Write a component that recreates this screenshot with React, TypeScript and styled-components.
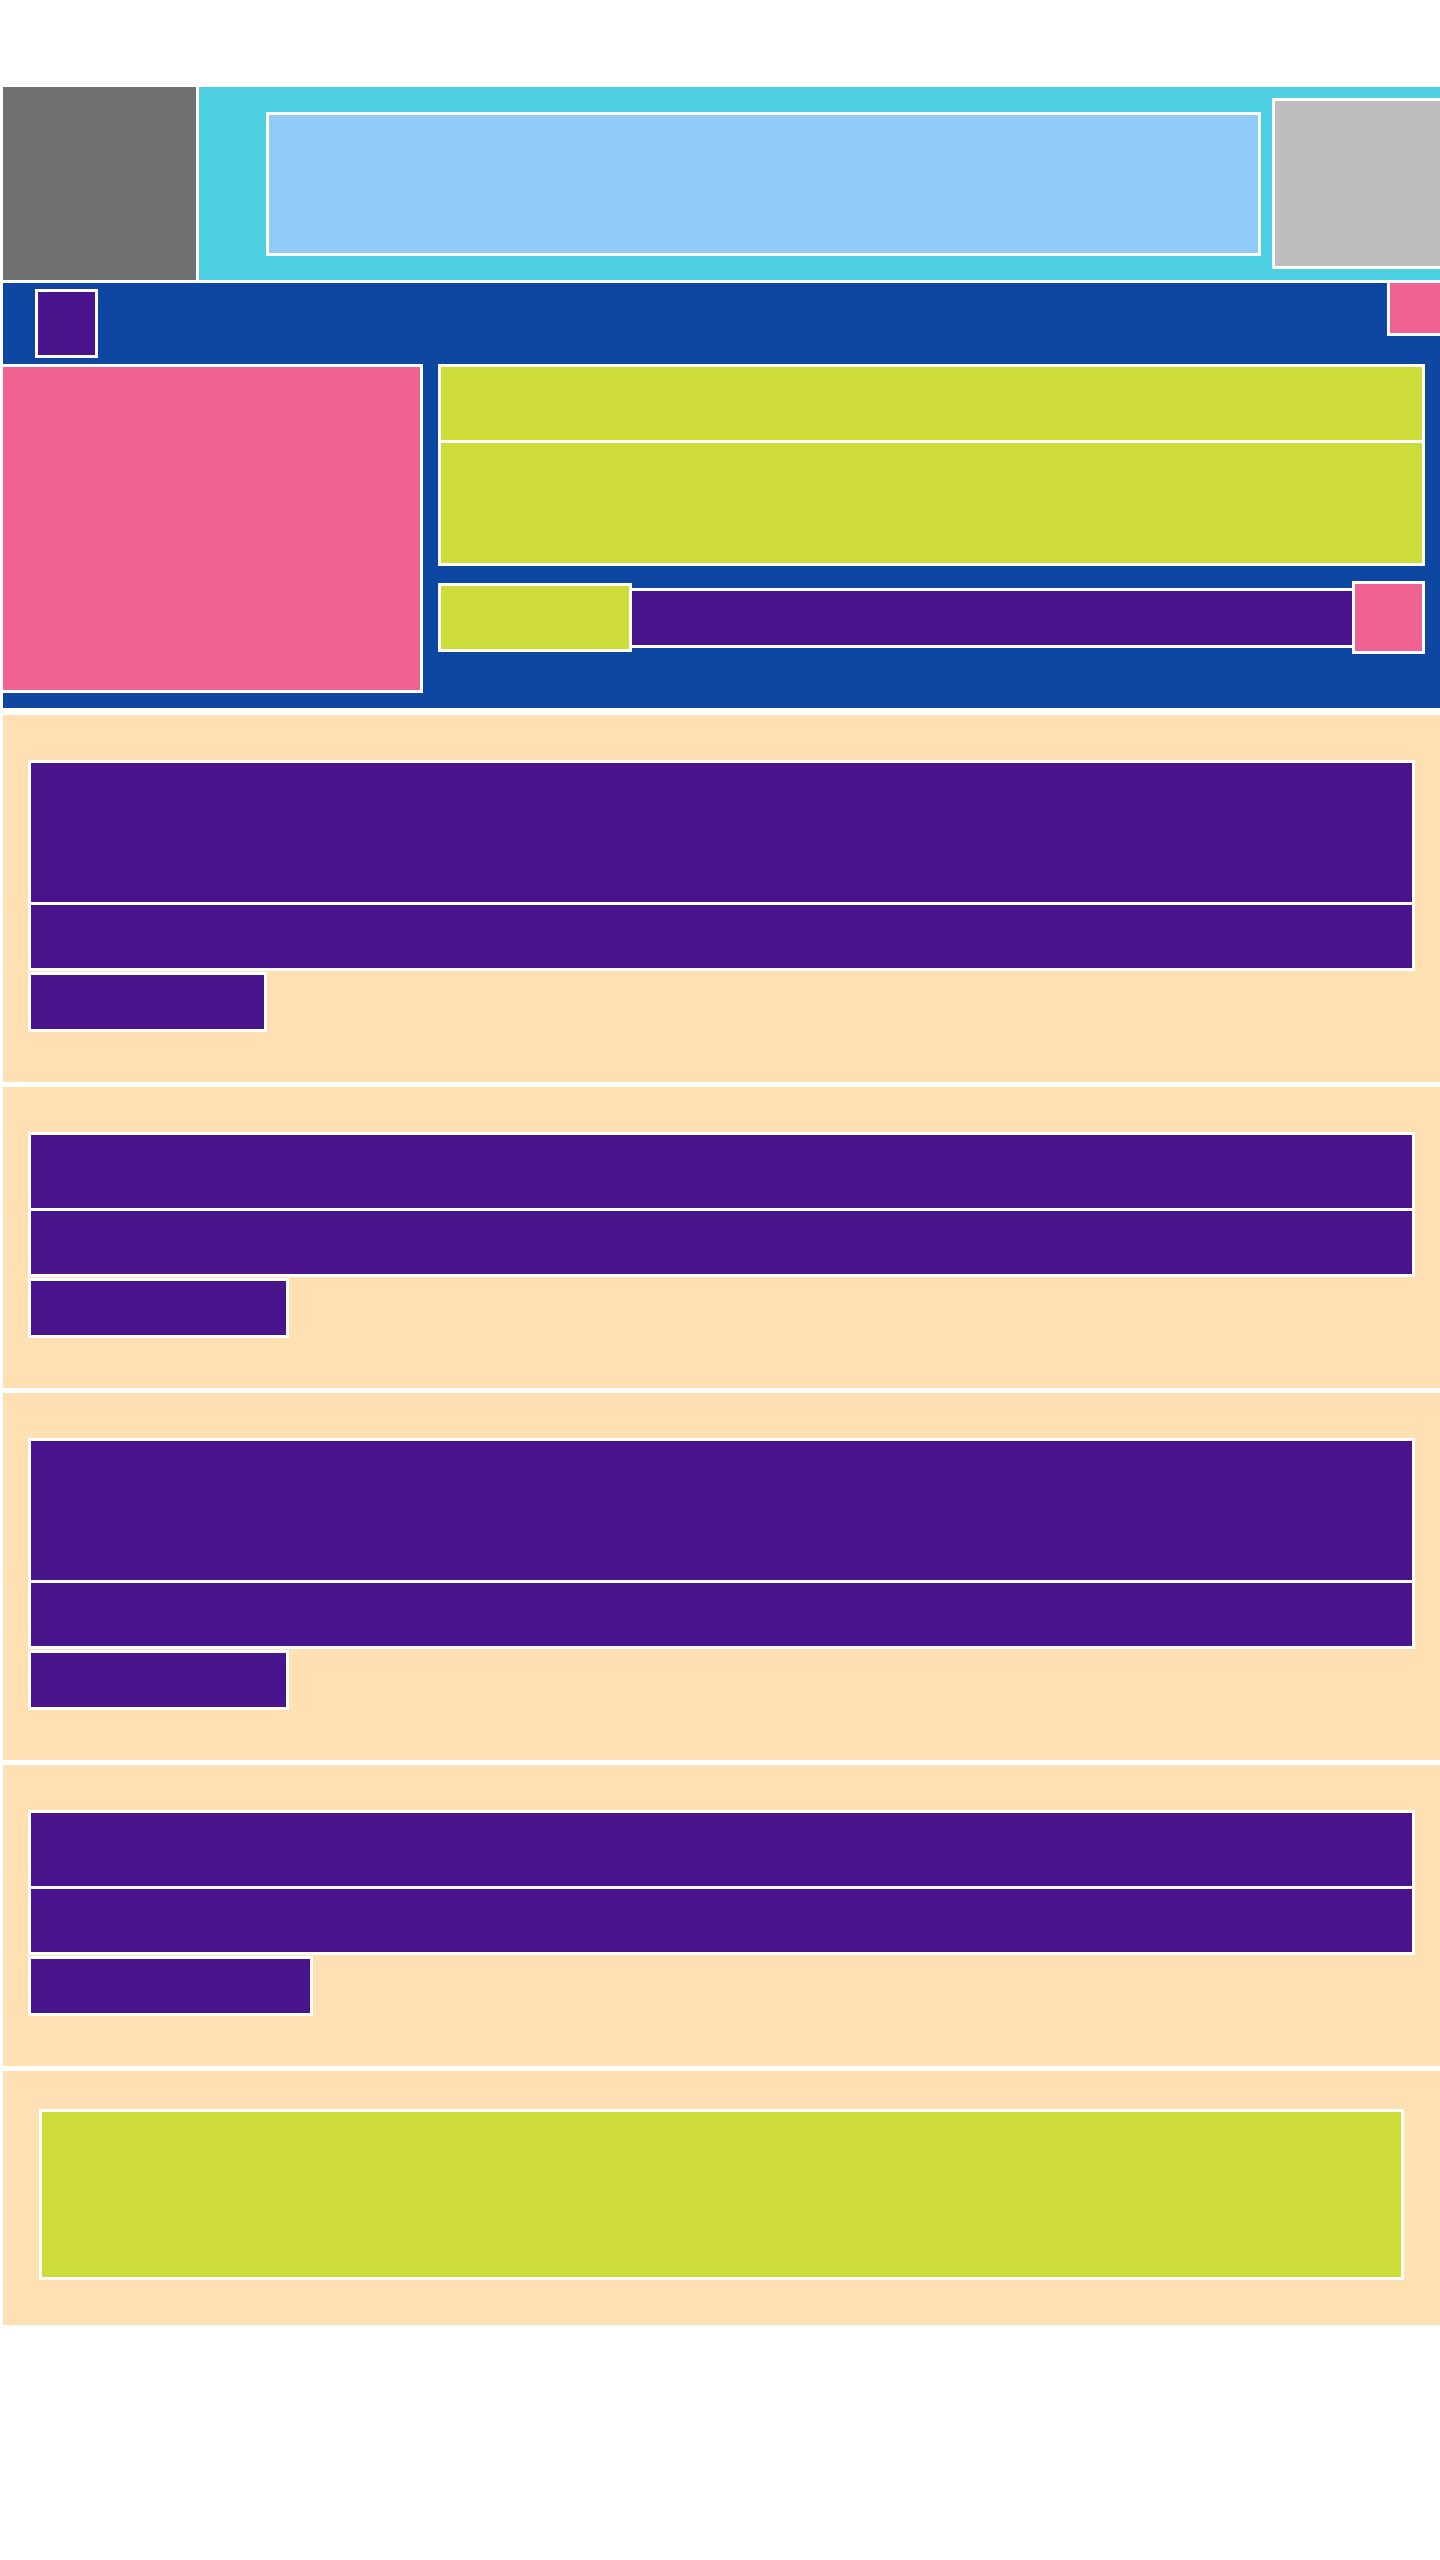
import React from 'react'
import styled, { createGlobalStyle } from "styled-components";

const GlobalStyle = createGlobalStyle`
html, body {
    margin: 0;
    padding: 0;
    background: #ffffff;
    font-family: "Liberation Sans", Arial, sans-serif;
}
body {
    overflow-x: hidden;
}
* {
    box-sizing: border-box;
}
`

const colors = {
    white: '#ffffff',
    gray: '#707070',
    cyan: '#4dd0e1',
    sky: '#90caf9',
    silver: '#bdbdbd',
    navy: '#0d47a1',
    purple: '#4a148c',
    pink: '#f06292',
    lime: '#cddc39',
    peach: '#ffe0b2'
}

const Page = styled.div`
padding-top: 84px;
display: flex;
flex-direction: column;
`

// sections are 3px wider than the viewport on each side, the right stroke is cut off
const TopBar = styled.header`
width: calc(100% + 6px);
height: 199px;
display: flex;
align-items: center;
background: ${colors.cyan};
border: 3px solid ${colors.white};
`

const Logo = styled.div`
align-self: stretch;
width: 196px;
background: ${colors.gray};
border-right: 3px solid ${colors.white};
`

const SearchBox = styled.div`
flex: 1;
height: 144px;
margin-left: 67px;
background: ${colors.sky};
border: 3px solid ${colors.white};
`

const Avatar = styled.div`
width: 171px;
height: 171px;
margin-left: 11px;
background: ${colors.silver};
border: 3px solid ${colors.white};
`

const Hero = styled.section`
position: relative;
width: calc(100% + 6px);
margin-top: -3px;
background: ${colors.navy};
border: 3px solid ${colors.white};
`

const HeroToolbar = styled.div`
height: 81px;
display: flex;
align-items: center;
padding-left: 32px;
`

const MenuButton = styled.div`
width: 63px;
height: 69px;
background: ${colors.purple};
border: 3px solid ${colors.white};
`

const CloseBadge = styled.div`
position: absolute;
top: -3px;
right: 0;
width: 56px;
height: 56px;
background: ${colors.pink};
border: 3px solid ${colors.white};
`

const HeroBody = styled.div`
display: flex;
align-items: flex-start;
gap: 15px;
padding: 0 18px 15px 0;
`

const Poster = styled.div`
width: 423px;
height: 329px;
margin-left: -3px;
flex-shrink: 0;
background: ${colors.pink};
border: 3px solid ${colors.white};
`

const Details = styled.div`
flex: 1;
display: flex;
flex-direction: column;
gap: 15px;
`

const InfoCard = styled.div`
background: ${colors.lime};
border: 3px solid ${colors.white};

& .info-title {
    height: 76px;
    border-bottom: 3px solid ${colors.white};
}

& .info-body {
    height: 120px;
}
`

const ActionRow = styled.div`
display: flex;
align-items: center;
`

const Chip = styled.div`
width: 194px;
height: 69px;
background: ${colors.lime};
border: 3px solid ${colors.white};
`

const Progress = styled.div`
flex: 1;
height: 60px;
background: ${colors.purple};
border-top: 3px solid ${colors.white};
border-bottom: 3px solid ${colors.white};
`

const IconButton = styled.div`
width: 73px;
height: 73px;
background: ${colors.pink};
border: 3px solid ${colors.white};
`

const Panel = styled.section<{ $first?: boolean }>`
width: calc(100% + 6px);
margin-top: ${(p) => (p.$first ? '1px' : '-1px')};
padding: 45px 28px 50px 25px;
background: ${colors.peach};
border: 3px solid ${colors.white};
`

const PostCard = styled.article<{ $tall: boolean }>`
background: ${colors.purple};
border: 3px solid ${colors.white};

& .post-title {
    height: ${(p) => (p.$tall ? '142px' : '76px')};
    border-bottom: 3px solid ${colors.white};
}

& .post-excerpt {
    height: 63px;
}
`

const ReadMore = styled.div<{ $width: number }>`
width: ${(p) => p.$width}px;
height: 60px;
margin-top: 1px;
background: ${colors.purple};
border: 3px solid ${colors.white};
`

const Footer = styled.footer`
width: calc(100% + 6px);
margin-top: -1px;
padding: 38px 39px 45px 36px;
background: ${colors.peach};
border: 3px solid ${colors.white};
`

const Newsletter = styled.div`
height: 171px;
background: ${colors.lime};
border: 3px solid ${colors.white};
`

type Post = {
    id: string,
    tall: boolean,
    moreWidth: number
}

const posts: Post[] = [
    { id: 'p1', tall: true, moreWidth: 239 },
    { id: 'p2', tall: false, moreWidth: 261 },
    { id: 'p3', tall: true, moreWidth: 261 },
    { id: 'p4', tall: false, moreWidth: 285 }
]

export default function App() {
  return (
    <>
      <GlobalStyle />
      <Page>
        <TopBar>
          <Logo />
          <SearchBox />
          <Avatar />
        </TopBar>

        <Hero>
          <HeroToolbar>
            <MenuButton />
          </HeroToolbar>
          <CloseBadge />
          <HeroBody>
            <Poster />
            <Details>
              <InfoCard>
                <div className='info-title' />
                <div className='info-body' />
              </InfoCard>
              <ActionRow>
                <Chip />
                <Progress />
                <IconButton />
              </ActionRow>
            </Details>
          </HeroBody>
        </Hero>

        {posts.map((post, index) => (
          <Panel key={post.id} $first={index === 0}>
            <PostCard $tall={post.tall}>
              <div className='post-title' />
              <div className='post-excerpt' />
            </PostCard>
            <ReadMore $width={post.moreWidth} />
          </Panel>
        ))}

        <Footer>
          <Newsletter />
        </Footer>
      </Page>
    </>
  )
}
